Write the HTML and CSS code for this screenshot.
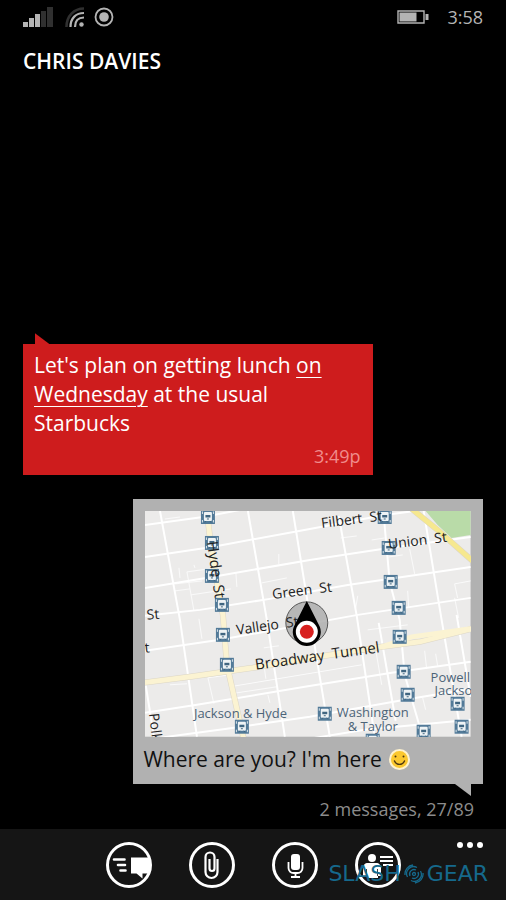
FILE: index.html
```html
<!DOCTYPE html>
<html lang="en">
<head>
    <meta charset="UTF-8">
    <meta name="viewport" content="width=device-width, initial-scale=1.0">
    <title>Chris Davies - Messages</title>
    <link rel="stylesheet" href="styles.css">
</head>
<body>
    <div class="phone">
        <!-- Status bar -->
        <div class="status-bar">
            <svg class="signal" width="30" height="20" viewBox="0 0 30 20">
                <g fill="#b4b4b4"><path d="M0 15h5v5H0z"/><path d="M6 11h5v9H6z"/><path d="M12 7h5v13h-5z"/></g>
                <g fill="#303030"><path d="M18 4h5v16h-5z"/><path d="M24 0h6v20h-6z"/></g>
            </svg>
            <svg class="wifi" width="20" height="20" viewBox="0 0 20 20" fill="none" stroke="#b4b4b4" stroke-width="2.200">
                <path d="M1.500 20C1.500 9 9 1.500 19 1.500" stroke="#303030" stroke-width="2.600"/>
                <path d="M5.500 20C5.500 11 11 6 19 6"/>
                <path d="M10 20C10 14 13 10.500 19 10.500"/>
                <circle cx="16.500" cy="17.500" r="2.200" fill="#b4b4b4" stroke="none"/>
            </svg>
            <svg class="record" width="20" height="20" viewBox="0 0 20 20">
                <circle cx="10" cy="10" r="8.500" fill="none" stroke="#b4b4b4" stroke-width="1.800"/>
                <circle cx="10" cy="10" r="4.800" fill="#b4b4b4"/>
            </svg>
            <svg class="battery" width="32" height="14" viewBox="0 0 32 14">
                <path d="M1 1h26v12H1z" fill="none" stroke="#b4b4b4" stroke-width="1.400"/>
                <path d="M2.500 2.500h17v9h-17zM28.500 4h3v6h-3z" fill="#b4b4b4"/>
            </svg>
            <span class="clock">3:58</span>
        </div>

        <h1 class="contact">CHRIS DAVIES</h1>

        <!-- Messages -->
        <main class="thread">
            <div class="bubble received">
                <p class="text">Let's plan on getting lunch <a href="#">on Wednesday</a> at the usual Starbucks</p>
                <div class="time">3:49p</div>
            </div>

            <div class="bubble sent">
                <svg class="map" viewBox="0 0 326 226">
                    <defs>
                        <g id="stop">
                            <path d="M-7-7H7V7H-7z" fill="#527a98"/>
                            <path d="M-5.500-5.500v2.500M5.500-5.500v2.500M-5.500 3v2.500M5.500 3v2.500" stroke="#dce5ea"/>
                            <rect x="-4" y="-5" width="8" height="9" rx="1" fill="#eef3f5"/>
                            <path d="M-2.500-2h5v2.500h-5z" fill="#3f6580"/>
                            <path d="M-1 2h2M-3 5.500l1-1.500M3 5.500l-1-1.500" stroke="#3f6580"/>
                        </g>
                    </defs>
                    <rect width="326" height="226" fill="#ecebea"/>
                    <path d="M281 0h45v24l-19 3-14-13z" fill="#b9dba8"/>

                    <!-- side streets -->
                    <g class="lane">
                        <path d="M20 8l15-2M50 57l-1-3M35 67l-1-10M42 61l28-4M42 61l7 39M30 80l15-2M46 84l40-6M30 73l27-3M134 53v-10M92 76l-1-14M117 72l25-5M196 27l16-2M227 29l13-2M244 46l14-2M265 38l5 25M264 96l-1-16M313 87l-3-14 16-3M213 85l-2 12M57 128l-3-20M119 137l15-2M121 168l-2-15M63 167l22-3M63 167l6 26M25 174l17-1M85 176l132-22M86 183l46-7M125 192l-2-8M282 158l-2-18M293 155l-2-12M281 199l-3-12M231 139l6 35M223 119l40-5M310 87l4 20"/>
                    </g>
                    <!-- streets -->
                    <g class="street">
                        <path d="M0 14l58-8 37-7"/>
                        <path d="M0 46l67-10 98-18 75-14 30-4"/>
                        <path d="M0 77l67-11 98-17 79-12 82-11"/>
                        <path d="M0 105l55-6 70-11 78-14 123-18"/>
                        <path d="M0 140l75-11 138-25 113-17"/>
                        <path d="M0 202l52-8 108-18 87-14 79-11"/>
                        <path d="M15 227l67-9 83-12 95-17 66-11"/>
                        <path d="M165 228l55-9 106-10"/>
                        <path d="M15 0l20 109 17 117"/>
                        <path d="M0 170l9 56"/>
                        <path d="M103 0l19 109 18 117"/>
                        <path d="M148 0l25 154 12 72"/>
                        <path d="M194 5l18 100 18 121"/>
                        <path d="M234 112l17 98"/>
                        <path d="M239 4l6 67 10 38 5 55 18 62"/>
                        <path d="M279 0l18 109 20 117"/>
                        <path d="M312 104l14 82"/>
                    </g>
                    <!-- main roads -->
                    <g class="main-edge">
                        <path d="M62 0l5 44 11 60 4 50 17 75"/>
                        <path d="M-2 172l47-6 63-9 72-12 57-9 38-5 52-13"/>
                        <path d="M266-3l27 22 35 31"/>
                    </g>
                    <g class="main-road">
                        <path d="M62 0l5 44 11 60 4 50 17 75"/>
                        <path d="M-2 172l47-6 63-9 72-12 57-9 38-5 52-13"/>
                        <path d="M237 136l30-10 59-8"/>
                        <path d="M266-3l27 22 35 31" stroke="#f6e88f"/>
                    </g>

                    <g>
                        <use href="#stop" x="63" y="6"/><use href="#stop" x="67" y="32"/>
                        <use href="#stop" x="67" y="65"/><use href="#stop" x="77" y="94"/>
                        <use href="#stop" x="78" y="124"/><use href="#stop" x="82" y="154"/>
                        <use href="#stop" x="97" y="216"/><use href="#stop" x="240" y="6"/>
                        <use href="#stop" x="244" y="37"/><use href="#stop" x="246" y="71"/>
                        <use href="#stop" x="254" y="97"/><use href="#stop" x="255" y="126"/>
                        <use href="#stop" x="259" y="161"/><use href="#stop" x="263" y="184"/>
                        <use href="#stop" x="180" y="203"/><use href="#stop" x="313" y="193"/>
                        <use href="#stop" x="317" y="216"/><use href="#stop" x="279" y="221"/>
                        <use href="#stop" x="228" y="230"/>
                    </g>

                    <circle cx="162" cy="112" r="21" fill="#aaa" fill-opacity=".8" stroke="#555"/>

                    <g class="street-name">
                        <text transform="translate(177 17) rotate(-7)">Filbert&#160; St</text>
                        <text transform="translate(244 38) rotate(-7)">Union&#160; St</text>
                        <text transform="translate(128 88) rotate(-7)">Green&#160; St</text>
                        <text transform="translate(92 124) rotate(-8)">Vallejo&#160; St</text>
                        <text class="large" transform="translate(111 159) rotate(-8)">Broadway&#160; Tunnel</text>
                        <text class="large" transform="translate(62 31) rotate(82)">Hyde&#160; St</text>
                        <text transform="translate(4 203) rotate(83)">Polk</text>
                        <text transform="translate(2 109) rotate(-5)">St</text>
                        <text transform="translate(0 142) rotate(-5)">t</text>
                    </g>
                    <g class="place-name">
                        <text x="49" y="207">Jackson &amp; Hyde</text>
                        <text x="192" y="206">Washington</text>
                        <text x="203" y="220">&amp; Taylor</text>
                        <text x="286" y="171">Powell</text>
                        <text x="290" y="184">Jackson</text>
                    </g>

                    <path d="M162 90l12 24a14 14 0 1 1-24 0z" fill="#000"/>
                    <circle cx="162" cy="121" r="11" fill="#fff"/>
                    <circle cx="162" cy="121" r="7" fill="#d8201f"/>
                </svg>
                <p class="text">Where are you? I'm here
                    <svg class="smiley" width="21" height="21" viewBox="0 0 21 21">
                        <circle cx="10.500" cy="10.500" r="9.500" fill="#fbc82f" stroke="#fff3cf" stroke-width="2"/>
                        <circle cx="6.500" cy="7.500" r="1" fill="#4a3510"/>
                        <circle cx="14.500" cy="7.500" r="1" fill="#4a3510"/>
                        <path d="M5.500 12c2 4.500 8 4.500 10 0" fill="none" stroke="#4a3510" stroke-width="1.400" stroke-linecap="round"/>
                    </svg>
                </p>
            </div>
            <div class="count">2 messages, 27/89</div>
        </main>

        <!-- App bar -->
        <footer class="app-bar">
            <div class="actions">
                <button class="round" aria-label="Send">
                    <svg width="46" height="46" viewBox="0 0 46 46">
                        <path d="M25 15.500h19v16h-7.500v5l-6-5H25z" fill="#fff"/>
                        <path d="M8 17.500h10.500M12 23h7M14.500 28.500h5" stroke="#fff" stroke-width="2.600" stroke-linecap="round"/>
                        <circle cx="23" cy="23" r="21.500" fill="none" stroke="#fff" stroke-width="3"/>
                    </svg>
                </button>
                <button class="round" aria-label="Attach">
                    <svg width="46" height="46" viewBox="0 0 46 46" fill="none" stroke="#fff">
                        <circle cx="23" cy="23" r="21.500" stroke-width="3"/>
                        <path d="M20.500 17v9.500a2.500 2.500 0 0 0 5 0V15a4.500 4.500 0 0 0-9 0V30a6 6 0 0 0 12 0V17" stroke-width="2.200"/>
                    </svg>
                </button>
                <button class="round" aria-label="Voice">
                    <svg width="46" height="46" viewBox="0 0 46 46" fill="none" stroke="#fff">
                        <circle cx="23" cy="23" r="21.500" stroke-width="3"/>
                        <rect x="19" y="12" width="9" height="16" rx="3" fill="#fff" stroke="none"/>
                        <path d="M16.500 20v6a5 5 0 0 0 5 5h4a5 5 0 0 0 5-5v-6M23.500 31v4M19 35h9" stroke-width="1.800"/>
                    </svg>
                </button>
                <button class="round" aria-label="Contact card">
                    <svg width="46" height="46" viewBox="0 0 46 46" fill="#fff">
                        <circle cx="23" cy="23" r="21.500" fill="none" stroke="#fff" stroke-width="3"/>
                        <circle cx="17" cy="16" r="4"/>
                        <path d="M13 21h8c3 0 5 2 5 5v8h-3v2H12v-2H8v-8c0-3 2-5 5-5z"/>
                        <path d="M25 15h13M25 19h13M28 23h10" stroke="#fff" stroke-width="2"/>
                        <path d="M11.500 27v7M22.500 27v7" stroke="#151515" stroke-width=".8"/>
                    </svg>
                </button>
            </div>
            <button class="more" aria-label="More">
                <svg width="28" height="8" viewBox="0 0 28 8" fill="#fff">
                    <circle cx="4" cy="4" r="3"/><circle cx="14" cy="4" r="3"/><circle cx="24" cy="4" r="3"/>
                </svg>
            </button>
            <div class="watermark">
                <span>SLASH</span>
                <svg width="20" height="20" viewBox="0 0 20 20" fill="none" stroke="#15698c" stroke-width="1.300">
                    <circle cx="10" cy="10" r="1.500"/>
                    <path d="M6 12a4.500 4.500 0 0 1 6-6M14 8a4.500 4.500 0 0 1-6 6"/>
                    <path d="M3.500 13a7 7 0 0 1 9.500-9.500M16.500 7a7 7 0 0 1-9.500 9.500"/>
                    <path d="M1 11a9 9 0 0 1 8-10M19 9a9 9 0 0 1-8 10"/>
                </svg>
                <span>GEAR</span>
            </div>
        </footer>
    </div>
</body>
</html>
```
FILE: styles.css
```css
* { box-sizing: border-box; }
body { margin: 0; background: #000; color: #fff; font-family: "Open Sans", "Noto Sans", sans-serif; }
p, h1 { margin: 0; }
button { padding: 0; border: none; background: none; cursor: pointer; }
svg { display: block; }

.phone { display: flex; flex-direction: column; min-height: 100vh; }

.status-bar { display: flex; align-items: center; gap: 12px; height: 34px; padding: 0 23px; color: #b4b4b4; }
.record { margin-left: -3px; }
.battery { margin-left: auto; }
.clock { margin-left: 6px; font-size: 18px; line-height: 24px; }

.contact { padding: 12px 23px; font-size: 21px; font-weight: 600; line-height: 30px; }

.thread { flex: 1; display: flex; flex-direction: column; justify-content: flex-end; padding: 0 23px 5px; }
.bubble { position: relative; width: 76%; font-size: 21px; line-height: 29px; }
.bubble::before { content: ""; position: absolute; width: 16px; height: 12px; background: inherit; }

.received { margin-bottom: 24px; padding: 7px 12px 4px 11px; background: #ce1c1d; }
.received::before { left: 12px; top: -11px; clip-path: polygon(0 0, 100% 100%, 0 100%); }
.received a { color: inherit; text-decoration-thickness: 1px; text-underline-offset: 4px; }
.time { margin-top: 4px; color: #f08c8c; font-size: 18px; line-height: 29px; text-align: right; }

.sent { align-self: flex-end; padding: 12px 12px 10px; background: #b1b1b1; color: #111; }
.sent::before { right: 12px; bottom: -12px; clip-path: polygon(0 0, 100% 0, 100% 100%); }
.sent .text { display: flex; align-items: center; gap: 7px; margin: 8px -2px 0; }
.map { width: 100%; overflow: hidden; }
.lane { fill: none; stroke: #fafafa; stroke-width: 1; }
.street { fill: none; stroke: #fff; stroke-width: 2; }
.main-edge { fill: none; stroke: #dcd6c6; stroke-width: 6; }
.main-road { fill: none; stroke: #fbf3d2; stroke-width: 5; }
.street-name { fill: #222; font-size: 14px; }
.street-name .large { font-size: 15px; }
.place-name { fill: #4c6478; font-size: 13px; }

.count { margin-top: 10px; padding-right: 9px; color: #8c8c8c; font-size: 18px; line-height: 30px; text-align: right; }

.app-bar { position: relative; display: grid; grid-template-columns: 1fr auto 1fr; height: 71px; padding: 12px 22px; background: #151515; }
.actions { grid-column: 2; display: flex; gap: 37px; }
.more { justify-self: end; align-self: start; }
.watermark { position: absolute; right: 18px; bottom: 14px; display: flex; align-items: center; gap: 3px; color: #15698c; font: 22px/24px "DejaVu Sans", sans-serif; pointer-events: none; }
```
